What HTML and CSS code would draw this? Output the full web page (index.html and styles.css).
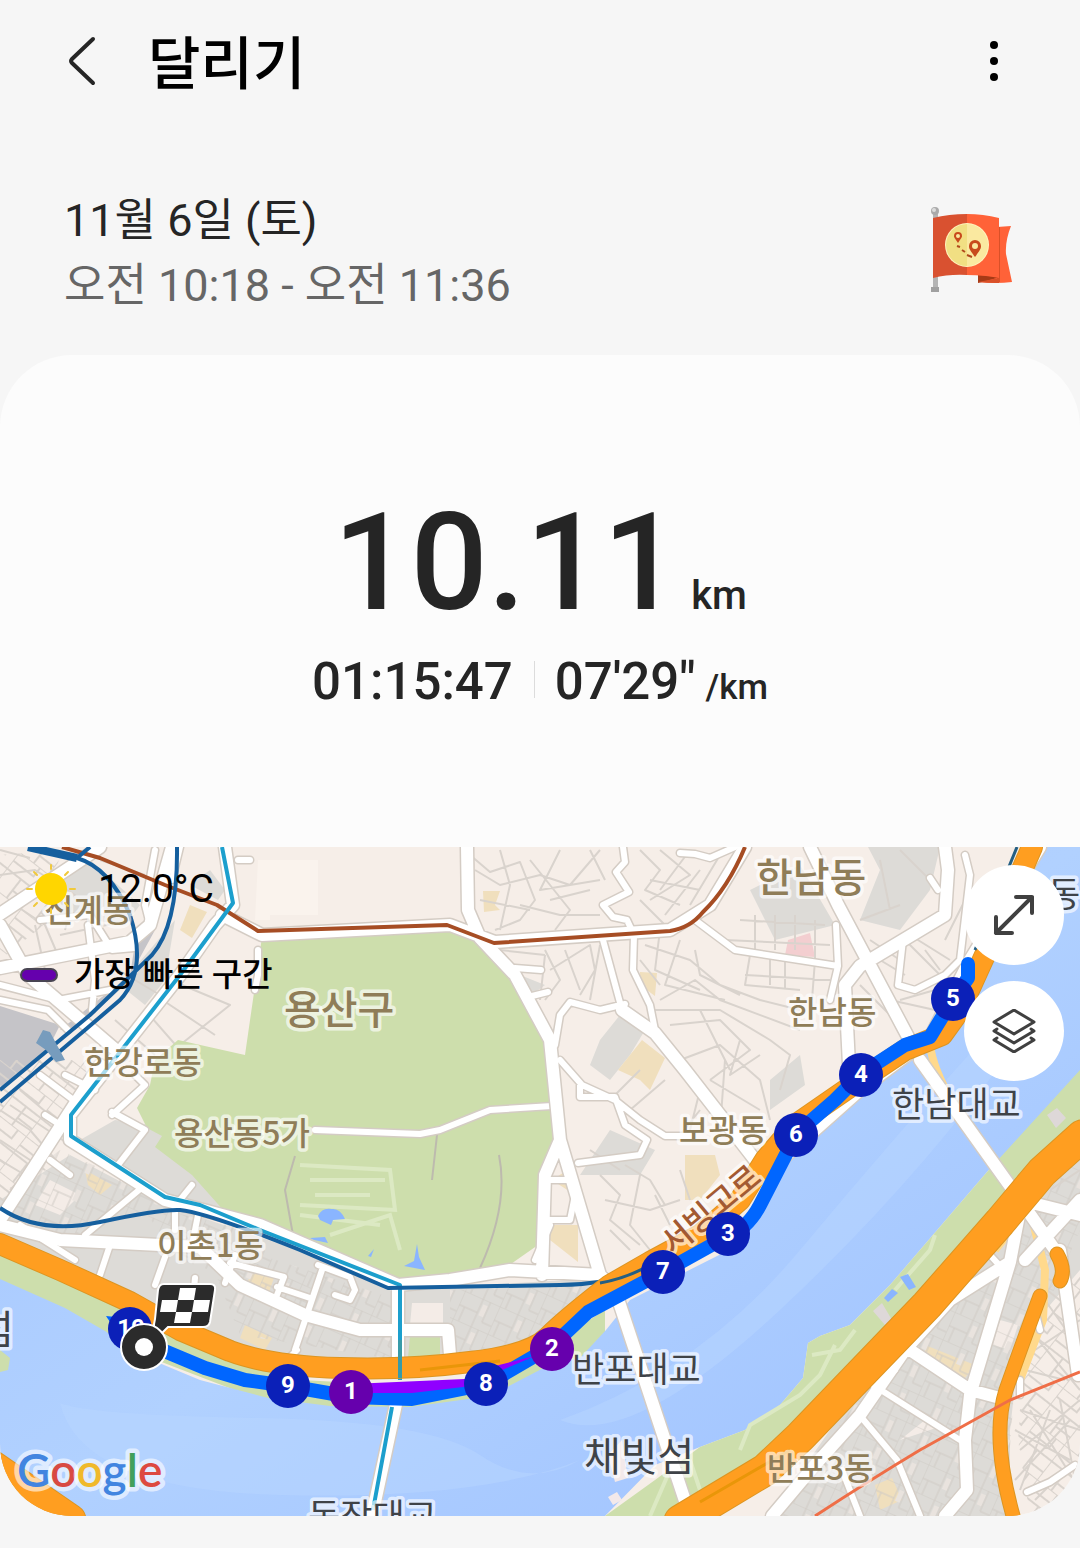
FILE: index.html
```html
<!DOCTYPE html>
<html lang="ko">
<head>
<meta charset="utf-8">
<meta name="viewport" content="width=device-width, initial-scale=1">
<title>달리기</title>
<link rel="stylesheet" href="styles.css">
</head>
<body>
<header class="topbar">
  <button class="icon-btn" type="button" aria-label="뒤로">
    <svg width="32" height="52" viewBox="0 0 32 52"><path class="chevron" d="M27 4 6 24Q4 26 6 28L27 48"/></svg>
  </button>
  <h1 class="title">달리기</h1>
  <button class="icon-btn more" type="button" aria-label="더보기">
    <svg width="12" height="44" viewBox="0 0 12 44"><circle cx="6" cy="6" r="4"/><circle cx="6" cy="22" r="4"/><circle cx="6" cy="38" r="4"/></svg>
  </button>
</header>

<main>
  <section class="session">
    <div class="when">
      <p class="date">11월 6일 (토)</p>
      <p class="time">오전 10:18 - 오전 11:36</p>
    </div>
    <svg class="flag" width="84" height="88" viewBox="0 0 84 88" aria-hidden="true">
      <path d="M4 8h5v74H4z" fill="#b4b4b4"/><path d="M2 81h8v5H2z" fill="#a0a0a0"/><circle cx="6" cy="5" r="4" fill="#aaa"/><circle cx="5" cy="4" r="2" fill="#ddd"/>
      <path d="M68 21l14-1q-6 15-5 28l6 28q-16 2-34 0v-9h19z" fill="#ff6238"/><path d="M68 21h3v55h-3z" fill="#d95028"/><path d="M49 69l21 2q-8 3-21 6z" fill="#a63a16"/><path d="M49 76l21-4v5q-12 0-21-1z" fill="#d95028"/>
      <path d="M4 12Q20 8 38 8V69Q20 68 4 72z" fill="#d95130"/><path d="M38 8q16 0 32 4v60q-14-3-32-3z" fill="#ff6238"/>
      <circle cx="38" cy="39" r="22" fill="#fff3bd"/><path d="M38 18a21 21 0 0 0 0 42z" fill="#f1df83"/><path d="M38 18a21 21 0 0 1 0 42z" fill="#fae9a0"/>
      <path d="M29 37c-4-6-4-6-4-7a4 4 0 0 1 8 0c0 1 0 1-4 7zM46 51c-6-8-6-9-6-11a6 6 0 0 1 12 0c0 2 0 3-6 11z" fill="#c84a1c"/><circle cx="29" cy="30" r="2" fill="#fae9a0"/><circle cx="46" cy="40" r="3" fill="#fae9a0"/>
      <path d="M28 40l3 1m2 3l3 2m2 3l5 2" stroke="#b04a1c" stroke-width="2" fill="none"/>
    </svg>
  </section>

  <article class="card">
    <section class="stats">
      <p class="distance">10.11<span class="unit">km</span></p>
      <div class="pace-row">
        <span>01:15:47</span>
        <span class="pace">07'29"<span class="pace-unit">/km</span></span>
      </div>
    </section>

    <section class="map" aria-label="경로 지도">
      <svg class="map-canvas" viewBox="0 847 1080 669" preserveAspectRatio="xMidYMid slice">
        <defs>
          <linearGradient id="water" x1="0" y1="0" x2="1" y2="1">
            <stop offset="0" stop-color="#a3c4ff"/><stop offset=".5" stop-color="#b1d1ff"/><stop offset="1" stop-color="#9dc0ff"/>
          </linearGradient>
          <pattern id="blocks" width="38" height="30" patternUnits="userSpaceOnUse" patternTransform="rotate(24)">
            <path d="M0 0H38M0 15H20M20 0V30M0 0V30M28 0V22H38M6 15V30" fill="none" stroke="#d0cbc5" stroke-width="1"/><path d="M22 5h5v12h-5z" fill="#e9e3de"/>
          </pattern>
          <pattern id="lanes" width="44" height="36" patternUnits="userSpaceOnUse" patternTransform="rotate(-52)">
            <path d="M0 0H44M0 18H24M24 0V36M0 0V36M34 0V26H44M10 18V36" fill="none" stroke="#d9d3cd" stroke-width="2"/>
          </pattern>
          <path id="side-roads" d="M155 850 145 905 150 925M180 847 172 880M238 860H250M258 950V975L255 990M40 920 90 915 112 950 134 948M88 925 95 980 92 1010M0 985 58 1000 110 990M0 1000 48 1010 68 1030M40 1075 80 1105M65 1075 95 1090M45 1115 68 1130M112 1115 145 1085 135 1075M112 1112 145 1130 118 1165M50 1160 70 1175M623 847 625 862 616 872 629 892 603 905 613 917 627 920 634 935 633 970 650 1005 655 1030M603 940 622 1010M680 853 695 854 710 858 735 847M555 1045 560 1015 570 1002 600 1010 625 1004M560 1060 582 1085 615 1100 640 1120 665 1136H690M580 1085V1097H615L625 1125 647 1140 640 1155 578 1163M515 968 541 970M532 996 548 992M695 920 735 950 838 966M838 966 836 925M838 966 830 1000M965 855 970 875 960 960 945 975 915 990 898 985 903 940M930 878 938 890M175 1210V1230M198 1215 193 1240M110 1245 100 1275M165 1257 155 1285M195 1278 193 1300M235 1255 225 1283M230 1263 284 1277 275 1300M277 1287 310 1298M318 1265 350 1277 355 1290 350 1300 335 1295M322 1270 295 1350M545 1180H572L575 1195 570 1220H548M535 1260 550 1225M85 1235 145 1185M180 1200 192 1185M20 1225 75 1260M297 1350 285 1362M865 1380 960 1440M862 1418 897 1460 920 1516M842 1470 860 1516M1027 1492 1050 1482 1075 1465M1040 1330 1035 1310M990 1255 1000 1266M1020 1380V1395M880 1360 895 1370"/>
          <path id="main-roads" d="M0 914 78 862 100 847M0 925 28 975 110 1045 122 1055M0 968 130 942 150 925 172 847M225 847 233 905 215 925 180 975 70 1115 70 1140 165 1200 260 1225 398 1285 450 1280 510 1270 600 1275 615 1290 690 1516M222 915 262 935 450 925 495 942 670 930 710 905 745 847M467 847 468 910 480 938 515 975 550 1040 560 1140 600 1275M560 1140 545 1175 542 1275M622 1010 655 1033 685 1070 755 1160M810 847 838 905 915 1050M860 966 945 915 948 870 945 847M860 966 845 985 850 1085M0 1225 60 1240 200 1247 240 1285 305 1315 360 1330H448L450 1355M398 1285 398 1370M0 1220 100 1065M770 1170 860 1090 930 1038 970 960 1040 847M920 1060 1020 1200 1055 1250M1020 1200 1080 1215M1025 1260 1080 1200M1020 1210 1010 1262 950 1300 905 1350 860 1415 815 1465 772 1516M1010 1262 970 1395 965 1440 967 1490 945 1516M910 1350 970 1390 1000 1398M1060 1250 1078 1375M398 1395 372 1516"/>
          <path id="small-lanes" d="M0 875 35 870 75 895 65 930M15 905 45 925 60 960M0 850 30 858M100 860 145 875M35 925 45 970M60 935 130 920M110 965 160 995M115 1020 155 1055M145 1010 180 1050M125 1035 170 980 230 1005 180 1045M155 995 215 1035M0 1110 30 1130 60 1165M10 1105 70 1145M0 1140 45 1170M20 1090 85 1145M0 1160 25 1175 10 1190M470 855 490 872 520 862 535 900 520 920 495 930M475 870 500 885 540 875 570 885 600 850M500 850 510 885 500 930M520 905 560 915 600 915M530 860 570 910 555 930M480 900 530 910M560 850 540 890 600 880M550 900 590 890M590 850 605 880M640 850 660 870 645 890 680 905M660 850 690 875 650 900M690 850 660 890M720 855 690 905M700 870 665 915M650 880 700 890M640 900 665 925M545 950 560 980 545 1000M550 970 590 945 595 970 580 995M565 950 580 990M600 945 590 1000M500 950 545 955M545 955 540 1000M645 945 690 960 720 985 760 1000 800 1010M660 930 655 970 700 990M680 940 665 985 725 1000M695 950 700 975 740 995M640 960 660 985M655 1010 720 1010 770 1040 790 1055 780 1090M670 1025 720 1020 750 1050 710 1080M700 1010 730 1070M660 1000 695 980 720 1000 800 1030M680 1060 720 1045 760 1080 770 1120M710 1080 760 1110M725 1060 720 1130M700 1090 690 1130M740 1040 730 1075 760 1055M640 1070 610 1100M665 1080 630 1110M700 1110 680 1135M750 955 745 985 800 990M770 955V985M785 955V990M815 960 812 1000M740 920 825 925M725 940 830 945M755 915V950M775 915V950M795 915V950M815 920V960M745 975 830 980M870 940 900 960 895 985M880 960 905 975M900 935 950 985M925 950 940 970M910 935 950 960M870 955 890 1000 935 1010M945 940 965 900M860 920 900 905M880 860 890 910M900 850 930 880M860 985 895 1020M875 1000 910 1035M900 1000 935 990M600 1175 620 1195 610 1220 640 1245M625 1165 650 1180 665 1205M605 1200 650 1210 680 1200M640 1175 630 1225 650 1250M610 1230 630 1250M655 1195 670 1225M680 1170 690 1200M590 1150 620 1170M1030 1330 1080 1390M1045 1300 1080 1350M1035 1350 1080 1320M1025 1370 1065 1380M1020 1410 1080 1430M1015 1430 1070 1460M1020 1450 1080 1400M1030 1410 1080 1490M1015 1480 1070 1420M1035 1500 1065 1470M1050 1410 1020 1490M1060 1400 1075 1480M1075 1100 1080 1160M1050 1190 1080 1170"/>
        </defs>

        <rect y="847" width="1080" height="669" fill="#f6eee8"/>
        <path class="grey" d="M50 870 90 860 140 905 125 925 60 915zM190 885 210 870 225 890 218 900zM120 985 175 920 165 980 145 1005zM115 1120 150 1125 225 1175 240 1225 170 1200 80 1140zM0 1240 0 1200 70 1155 165 1205 400 1285V1380L200 1340zM600 1040 620 1015 645 1030 630 1055 610 1080 590 1065zM750 890 800 865 835 925 775 940zM868 847H940L930 890 900 930 860 920 880 870zM610 1130 655 1150 640 1175 580 1175zM770 1080 800 1055 805 1085 770 1110zM400 1290 600 1278 530 1350 400 1365zM520 975 545 985 530 996zM1080 1150 1050 1180 980 1270 900 1330 830 1430 770 1516H1010V1430L1020 1340 1080 1270z"/>
        <path fill="#c5c4c8" d="M0 1006 60 1025 45 1055 0 1092zM60 1030 130 975 138 925 155 930 125 985 75 1030z"/>
        <path fill="#f0dfbd" d="M190 905 207 912 192 938 180 930zM640 972 657 973 655 996 640 985zM483 891H500L495 905 500 910 484 912zM618 1070 642 1040 665 1058 650 1090 640 1080zM685 1155 715 1155 720 1175 700 1200H685zM85 1170 112 1185 100 1195 88 1185zM550 1240V1225H578V1262zM552 1180 575 1165V1195zM925 1345 975 1365 965 1378 925 1355zM875 1485 892 1478 902 1500 880 1510zM250 1265 275 1275 268 1295 248 1285zM245 1325 272 1338 265 1350 240 1338z"/>
        <path fill="#f3ced0" d="M788 940 810 933 815 957 785 955z"/>
        <path fill="#faf3ed" d="M258 860H318V915H270V920H255z"/>
        <path fill="#f4ece7" d="M412 1303H443V1325H410zM50 1180 80 1195 60 1215 35 1205zM1000 1320 1018 1325 1010 1350 993 1345zM925 1420 945 1425 900 1440z"/>
        <path fill="url(#lanes)" d="M0 1060 100 1060 0 1220zM1030 1290 1080 1270V1516H1030L1018 1440zM0 855 60 850 50 920 0 960z"/>
        <path fill="url(#blocks)" d="M60 1150 170 1200 60 1240 0 1220V1195zM200 1235 398 1300V1360L240 1335zM450 1290 590 1285 530 1345 450 1365zM1060 1175 1000 1265 900 1345 770 1516H1005L1015 1380 1080 1230V1160zM140 1205 250 1230 300 1300 180 1260z"/>
        <use href="#small-lanes" class="lane"/>

        <path class="park" d="M262 937 450 927 475 940 515 978 545 1035 552 1105 559 1143 545 1175 538 1245 505 1268 410 1283 280 1235 225 1212 192 1175 155 1147 162 1136 147 1128 137 1108 150 1085 155 1060 178 1040 245 1055z"/>
        <path class="park-detail" d="M300 1165 390 1170 395 1210 300 1205M310 1180H385M315 1195H370M300 1215 380 1225M330 1235 390 1215 400 1250"/>
        <path d="M295 1156 285 1190 293 1235M437 1135 432 1180M499 1155Q509 1205 480 1268" fill="none" stroke="#bdbaae" stroke-width="2"/>
        <path fill="#8ab5ff" d="M318 1216Q322 1207 332 1209 340 1208 345 1219L333 1220 331 1225 320 1220zM310 1238 325 1237 328 1243 314 1240zM417 1244 419 1257 425 1270 404 1266 414 1261zM368 1256 374 1249 371 1257z"/>
        <path class="road-case side" d="M315 1130 420 1134 440 1130 490 1110 552 1106"/><path class="road-fill side" d="M315 1130 420 1134 440 1130 490 1110 552 1106"/>
        <path class="park" d="M410 1336H440V1358H408z"/>

        <path class="park" d="M0 1255 120 1305 220 1358 300 1380 400 1385 490 1378 550 1345 605 1310V1345L545 1400 300 1415 0 1300z"/>
        <path class="river" d="M0 1279 65 1308 105 1331 140 1355 200 1380 268 1398 330 1406 410 1407 490 1396 555 1362 580 1358 606 1330 630 1300 725 1252 748 1225 780 1165 860 1092 938 1045 962 1005 985 955 1046 847H1080V1075L987 1172 890 1285 850 1325 820 1336 808 1343 803 1378 780 1405 745 1430 700 1447 655 1465 605 1516H75L0 1462z"/>
        <path d="M60 1403Q90 1415 260 1418T480 1455 580 1460Q480 1500 280 1495T60 1403zM560 1420Q700 1370 800 1250T1000 1020L1040 1010Q930 1170 780 1310T560 1420z" fill="#b7d5ff" opacity=".5"/>
        <path class="park" d="M0 1350 10 1358 8 1370 0 1372z"/>
        <path class="park" d="M1080 1070 987 1172 890 1285 850 1325 820 1336 808 1343 803 1378 780 1405 745 1430 700 1447 655 1480 605 1516H690L850 1400 1080 1150z"/>
        <path class="park-detail" d="M835 1345 820 1375 800 1395 750 1425 740 1450M855 1330 840 1350 812 1355M895 1290 930 1250 935 1235M670 1470 650 1516M690 1460 700 1490"/>
        <path fill="#8ab5ff" d="M900 1277 908 1274 916 1287 909 1290zM884 1298 892 1289 898 1293 888 1302z"/>
        <path fill="#ded8d8" d="M873 1311 882 1303 892 1320 885 1325zM1047 1115 1057 1108 1066 1118 1056 1128z"/>
        <path fill="#f3e9ea" d="M608 1455 622 1440 628 1478 615 1482zM608 1497 617 1492 622 1500 613 1505z"/>
        <path d="M1055 1175 995 1250M930 1045Q935 1090 1010 1185L1000 1240M1030 1210 1045 1270 1043 1320 1018 1385" fill="none" stroke="#ffd98c" stroke-width="8"/>

        <use href="#side-roads" class="road-case side"/>
        <use href="#main-roads" class="road-case main"/>
        <use href="#side-roads" class="road-fill side"/>
        <use href="#main-roads" class="road-fill main"/>

        <g class="rail">
          <path stroke="#a64d24" stroke-width="4" d="M62 847 100 858 165 885 217 905 258 931 447 925 494 943 670 931Q690 928 703 912 728 888 745 847"/>
          <path stroke="#1c9fcd" stroke-width="4" d="M222 847 233 903 180 975 71 1115V1136L165 1197 200 1205 260 1230 400 1285V1380M392 1407 373 1510"/>
          <path stroke="#155f9e" stroke-width="8" d="M28 847 77 858"/>
          <path stroke="#155f9e" stroke-width="4" d="M90 847 77 858Q110 868 130 915 148 970 120 1000L85 1030 0 1102M177 847Q178 925 152 955L90 1015 0 1090M0 1208Q40 1235 100 1222T180 1210Q205 1212 300 1250L388 1288 560 1285Q605 1285 650 1268"/>
        </g>
        <path fill="#779cbd" d="M43 1030 50 1032 65 1060 56 1062 46 1050 36 1043z"/>

        <g class="highway-case"><path d="M0 1244 60 1270 130 1302 180 1330 230 1351Q270 1366 340 1368T470 1362Q530 1355 548 1337T610 1285L650 1262 700 1235 740 1200 765 1160 795 1125 850 1087 905 1050 942 1035 960 1010 985 955 1032 847"/><path class="wide" d="M1082 1136 1042 1172 1000 1222 927 1305 850 1385 800 1437 765 1470 680 1521M-10 1465 70 1520"/><path class="thin" d="M1057 1254Q1066 1270 1060 1281M1040 1296Q1020 1350 1006 1390 990 1440 1016 1526"/></g>
        <g class="highway"><path d="M0 1244 60 1270 130 1302 180 1330 230 1351Q270 1366 340 1368T470 1362Q530 1355 548 1337T610 1285L650 1262 700 1235 740 1200 765 1160 795 1125 850 1087 905 1050 942 1035 960 1010 985 955 1032 847"/><path class="wide" d="M1082 1136 1042 1172 1000 1222 927 1305 850 1385 800 1437 765 1470 680 1521M-10 1465 70 1520"/><path class="thin" d="M1057 1254Q1066 1270 1060 1281M1040 1296Q1020 1350 1006 1390 990 1440 1016 1526"/></g>
        <path d="M420 1370 500 1361M700 1502 790 1450" fill="none" stroke="#e99609" stroke-width="3"/>
        <path d="M600 1283Q630 1278 663 1258M780 1150 850 1090M975 950 1017 847" fill="none" stroke="#245f83" stroke-width="3"/>
        <path d="M400 1340V1378" fill="none" stroke="#399ba8" stroke-width="4"/>
        <path d="M815 1516Q870 1480 920 1450L1010 1400 1080 1372" fill="none" stroke="#ef6e47" stroke-width="3"/>

        <g class="place">
          <text class="lg" x="284" y="1024">용산구</text><text class="lg" x="756" y="892">한남동</text>
          <text x="44" y="922">신계동</text><text x="84" y="1074">한강로동</text><text x="174" y="1145">용산동5가</text><text x="157" y="1257">이촌1동</text><text x="788" y="1024">한남동</text><text x="679" y="1142">보광동</text><text x="767" y="1480">반포3동</text>
        </g>
        <g class="place bridge">
          <text x="892" y="1117">한남대교</text><text x="572" y="1382">반포대교</text><text x="308" y="1529">동작대교</text><text x="1048" y="907">동</text>
          <text class="lg" x="584" y="1471">채빛섬</text><text class="lg" x="-23" y="1344">섬</text>
        </g>
        <text class="place street" transform="translate(673 1256) rotate(-40)">서빙고로</text>

        <path class="route" d="M968 964V978L953 999 930 1037 905 1045 862 1073 835 1100 797 1133 760 1205Q748 1228 728 1236L663 1272 588 1312 552 1346 487 1384 412 1399 351 1397 288 1386 245 1380 205 1368 150 1345 120 1328"/>
        <path fill="#0066ff" d="M106 1316 125 1318 118 1334z"/>
        <path fill="#9000ff" d="M351 1384 465 1379 480 1385 412 1393H351zM495 1366 535 1356 495 1373z"/>

        <g class="marker">
          <circle cx="130" cy="1329" r="22"/><text x="131" y="1336">10</text>
          <circle cx="288" cy="1386" r="22"/><text x="288" y="1393">9</text>
          <circle cx="486" cy="1384" r="22"/><text x="486" y="1391">8</text>
          <circle cx="663" cy="1272" r="22"/><text x="663" y="1279">7</text>
          <circle cx="728" cy="1234" r="22"/><text x="728" y="1241">3</text>
          <circle cx="796" cy="1135" r="22"/><text x="796" y="1142">6</text>
          <circle cx="861" cy="1075" r="22"/><text x="861" y="1082">4</text>
          <circle cx="953" cy="999" r="22"/><text x="953" y="1006">5</text>
          <circle class="fast" cx="351" cy="1392" r="22"/><text x="351" y="1399">1</text>
          <circle class="fast" cx="552" cy="1349" r="22"/><text x="552" y="1356">2</text>
        </g>
        <path d="M164 1284H210Q216 1284 215 1290L210 1322Q209 1327 203 1327H168L157 1338Q152 1330 155 1319L158 1290Q159 1284 164 1284z" fill="#2b2b2b" stroke="#fff" stroke-width="2"/>
        <path fill="#fff" d="M180 1288H196L194 1300H178zM162 1300H178L176 1312H160zM194 1300H210L208 1312H192zM176 1312H192L190 1323H174z"/>
        <circle cx="144" cy="1347" r="23" fill="#2b2b2b" stroke="#fff" stroke-width="2"/><circle cx="144" cy="1347" r="9" fill="#fff"/>

        <text class="google" x="17" y="1487"><tspan fill="#4285e0">G</tspan><tspan fill="#d84a43">o</tspan><tspan fill="#f0b92b">o</tspan><tspan fill="#4285e0">g</tspan><tspan fill="#42a05c">l</tspan><tspan fill="#dd4a40">e</tspan></text>
      </svg>

      <div class="map-info">
        <p class="weather">
          <svg width="52" height="52" viewBox="0 0 52 52" aria-hidden="true"><circle cx="26" cy="26" r="16" fill="#ffd600"/><path d="M26 2v4M26 46v4M2 26h5M45 26h5M9 9l3 3M40 40l3 3M9 43l3-3M40 12l3-3" stroke="#f0c93c" stroke-width="2" stroke-linecap="round"/></svg>
          <span>12.0°C</span>
        </p>
        <p class="legend"><span class="swatch"></span>가장 빠른 구간</p>
      </div>
      <div class="map-controls">
        <button type="button" aria-label="지도 확대"><svg width="44" height="44" viewBox="0 0 44 44"><path d="M4 40 40 4M24 4H40V20M4 24V40H20"/></svg></button>
        <button type="button" aria-label="지도 유형"><svg width="44" height="44" viewBox="0 0 44 44"><path d="M22 1 42 13 22 25 2 13zM5 20 2 22 22 34 42 22 39 20M5 29 2 31 22 43 42 31 39 29"/></svg></button>
      </div>
    </section>
  </article>
</main>
</body>
</html>
```
FILE: styles.css
```css
* { box-sizing: border-box; }
body {
  margin: 0;
  background: #f6f6f6;
  color: #252525;
  font-family: Roboto, "Noto Sans CJK KR", sans-serif;
}
h1, p { margin: 0; }
button { border: 0; padding: 0; cursor: pointer; }

.topbar {
  display: flex;
  align-items: center;
  height: 122px;
  padding: 0 80px 0 66px;
}
.icon-btn { display: flex; background: none; }
.chevron { fill: none; stroke: #252525; stroke-width: 4; stroke-linecap: round; }
.title {
  margin-left: 50px;
  padding-top: 8px;
  color: #000;
  font-size: 57px;
  font-weight: 500;
  line-height: 80px;
}
.more { margin-left: auto; }

.session {
  display: flex;
  align-items: flex-start;
  justify-content: space-between;
  padding: 66px 67px 37px 64px;
}
.date, .time { font-size: 45px; line-height: 65px; }
.time { color: #666; }
.flag { margin-top: 18px; }

.card {
  overflow: hidden;
  margin-bottom: 32px;
  border-radius: 72px;
  background: #fcfcfc;
}
.stats {
  padding: 128px 0 129px;
  text-align: center;
  font-weight: 500;
}
.distance { font-size: 136px; line-height: 160px; }
.unit { margin-left: 11px; font-size: 40px; line-height: 1; }
.pace-row {
  display: flex;
  align-items: center;
  justify-content: center;
  margin-top: 3px;
  font-size: 51px;
  line-height: 72px;
}
.pace { position: relative; margin-left: 42px; }
.pace::before {
  content: "";
  position: absolute;
  left: -21px;
  top: 15px;
  width: 1px;
  height: 37px;
  background: #dcdcdc;
}
.pace-unit { margin-left: 10px; font-size: 35px; line-height: 1; }

.map { position: relative; }
.map-canvas { display: block; width: 100%; aspect-ratio: 1080 / 669; }
.map-info { position: absolute; left: 20px; top: 12px; color: #000; }
.weather { display: flex; align-items: center; gap: 21px; height: 60px; font-size: 39px; }
.weather svg { margin-left: 5px; }
.legend {
  display: flex;
  align-items: center;
  gap: 16px;
  margin-top: 32px;
  font-size: 33px;
  font-weight: 500;
  line-height: 48px;
}
.swatch { width: 38px; height: 14px; border: 2px solid #494553; border-radius: 7px; background: #6500ad; }
.map-controls { position: absolute; right: 16px; top: 18px; display: grid; gap: 16px; }
.map-controls button {
  display: grid;
  place-items: center;
  width: 100px;
  height: 100px;
  border-radius: 50%;
  background: #fff;
}
.map-controls path { fill: none; stroke: #404040; stroke-width: 4; stroke-linecap: round; stroke-linejoin: round; }
.map-controls button + button path { stroke-width: 3; }

.grey { fill: #dddbd7; }
.park { fill: #cddeac; }
.park-detail { fill: none; stroke: #dce9c3; stroke-width: 4; }
.river { fill: url(#water); }
.lane { fill: none; stroke: #d9d3cd; stroke-width: 2; stroke-linejoin: round; }
.road-case, .road-fill { fill: none; stroke-linejoin: round; stroke-linecap: round; }
.road-case { stroke: #d4ccc4; }
.road-fill { stroke: #fff; }
.road-case.side { stroke-width: 9px; }
.road-fill.side { stroke-width: 6px; }
.road-case.main { stroke-width: 15px; }
.road-fill.main { stroke-width: 12px; }
.rail { fill: none; stroke-linejoin: round; }
.highway, .highway-case { fill: none; stroke-linejoin: round; stroke-linecap: round; }
.highway { stroke: #ff9e20; stroke-width: 20px; }
.highway-case { stroke: #dc9522; stroke-width: 22px; }
.highway .wide { stroke-width: 31px; }
.highway-case .wide { stroke-width: 33px; }
.highway .thin { stroke-width: 13px; }
.highway-case .thin { stroke-width: 15px; }
.route { fill: none; stroke: #0066ff; stroke-width: 14px; stroke-linejoin: round; stroke-linecap: round; }

.place {
  fill: #8f7d58;
  stroke: #fff;
  stroke-opacity: .65;
  stroke-width: 7px;
  stroke-linejoin: round;
  paint-order: stroke;
  font-family: "Noto Sans CJK KR", sans-serif;
  font-size: 32px;
  font-weight: 500;
}
.place .lg { font-size: 40px; }
.bridge { fill: #3f4348; font-size: 35px; font-weight: 400; }
.street { fill: #a35a32; }
.marker { fill: #0b20b8; }
.marker .fast { fill: #6600ad; }
.marker text { fill: #fff; font-size: 24px; font-weight: 700; text-anchor: middle; }
.google {
  font-family: Lato, sans-serif;
  font-size: 46px;
  font-weight: 600;
  stroke: #fff;
  stroke-opacity: .6;
  stroke-width: 9px;
  stroke-linejoin: round;
  paint-order: stroke;
}
```
